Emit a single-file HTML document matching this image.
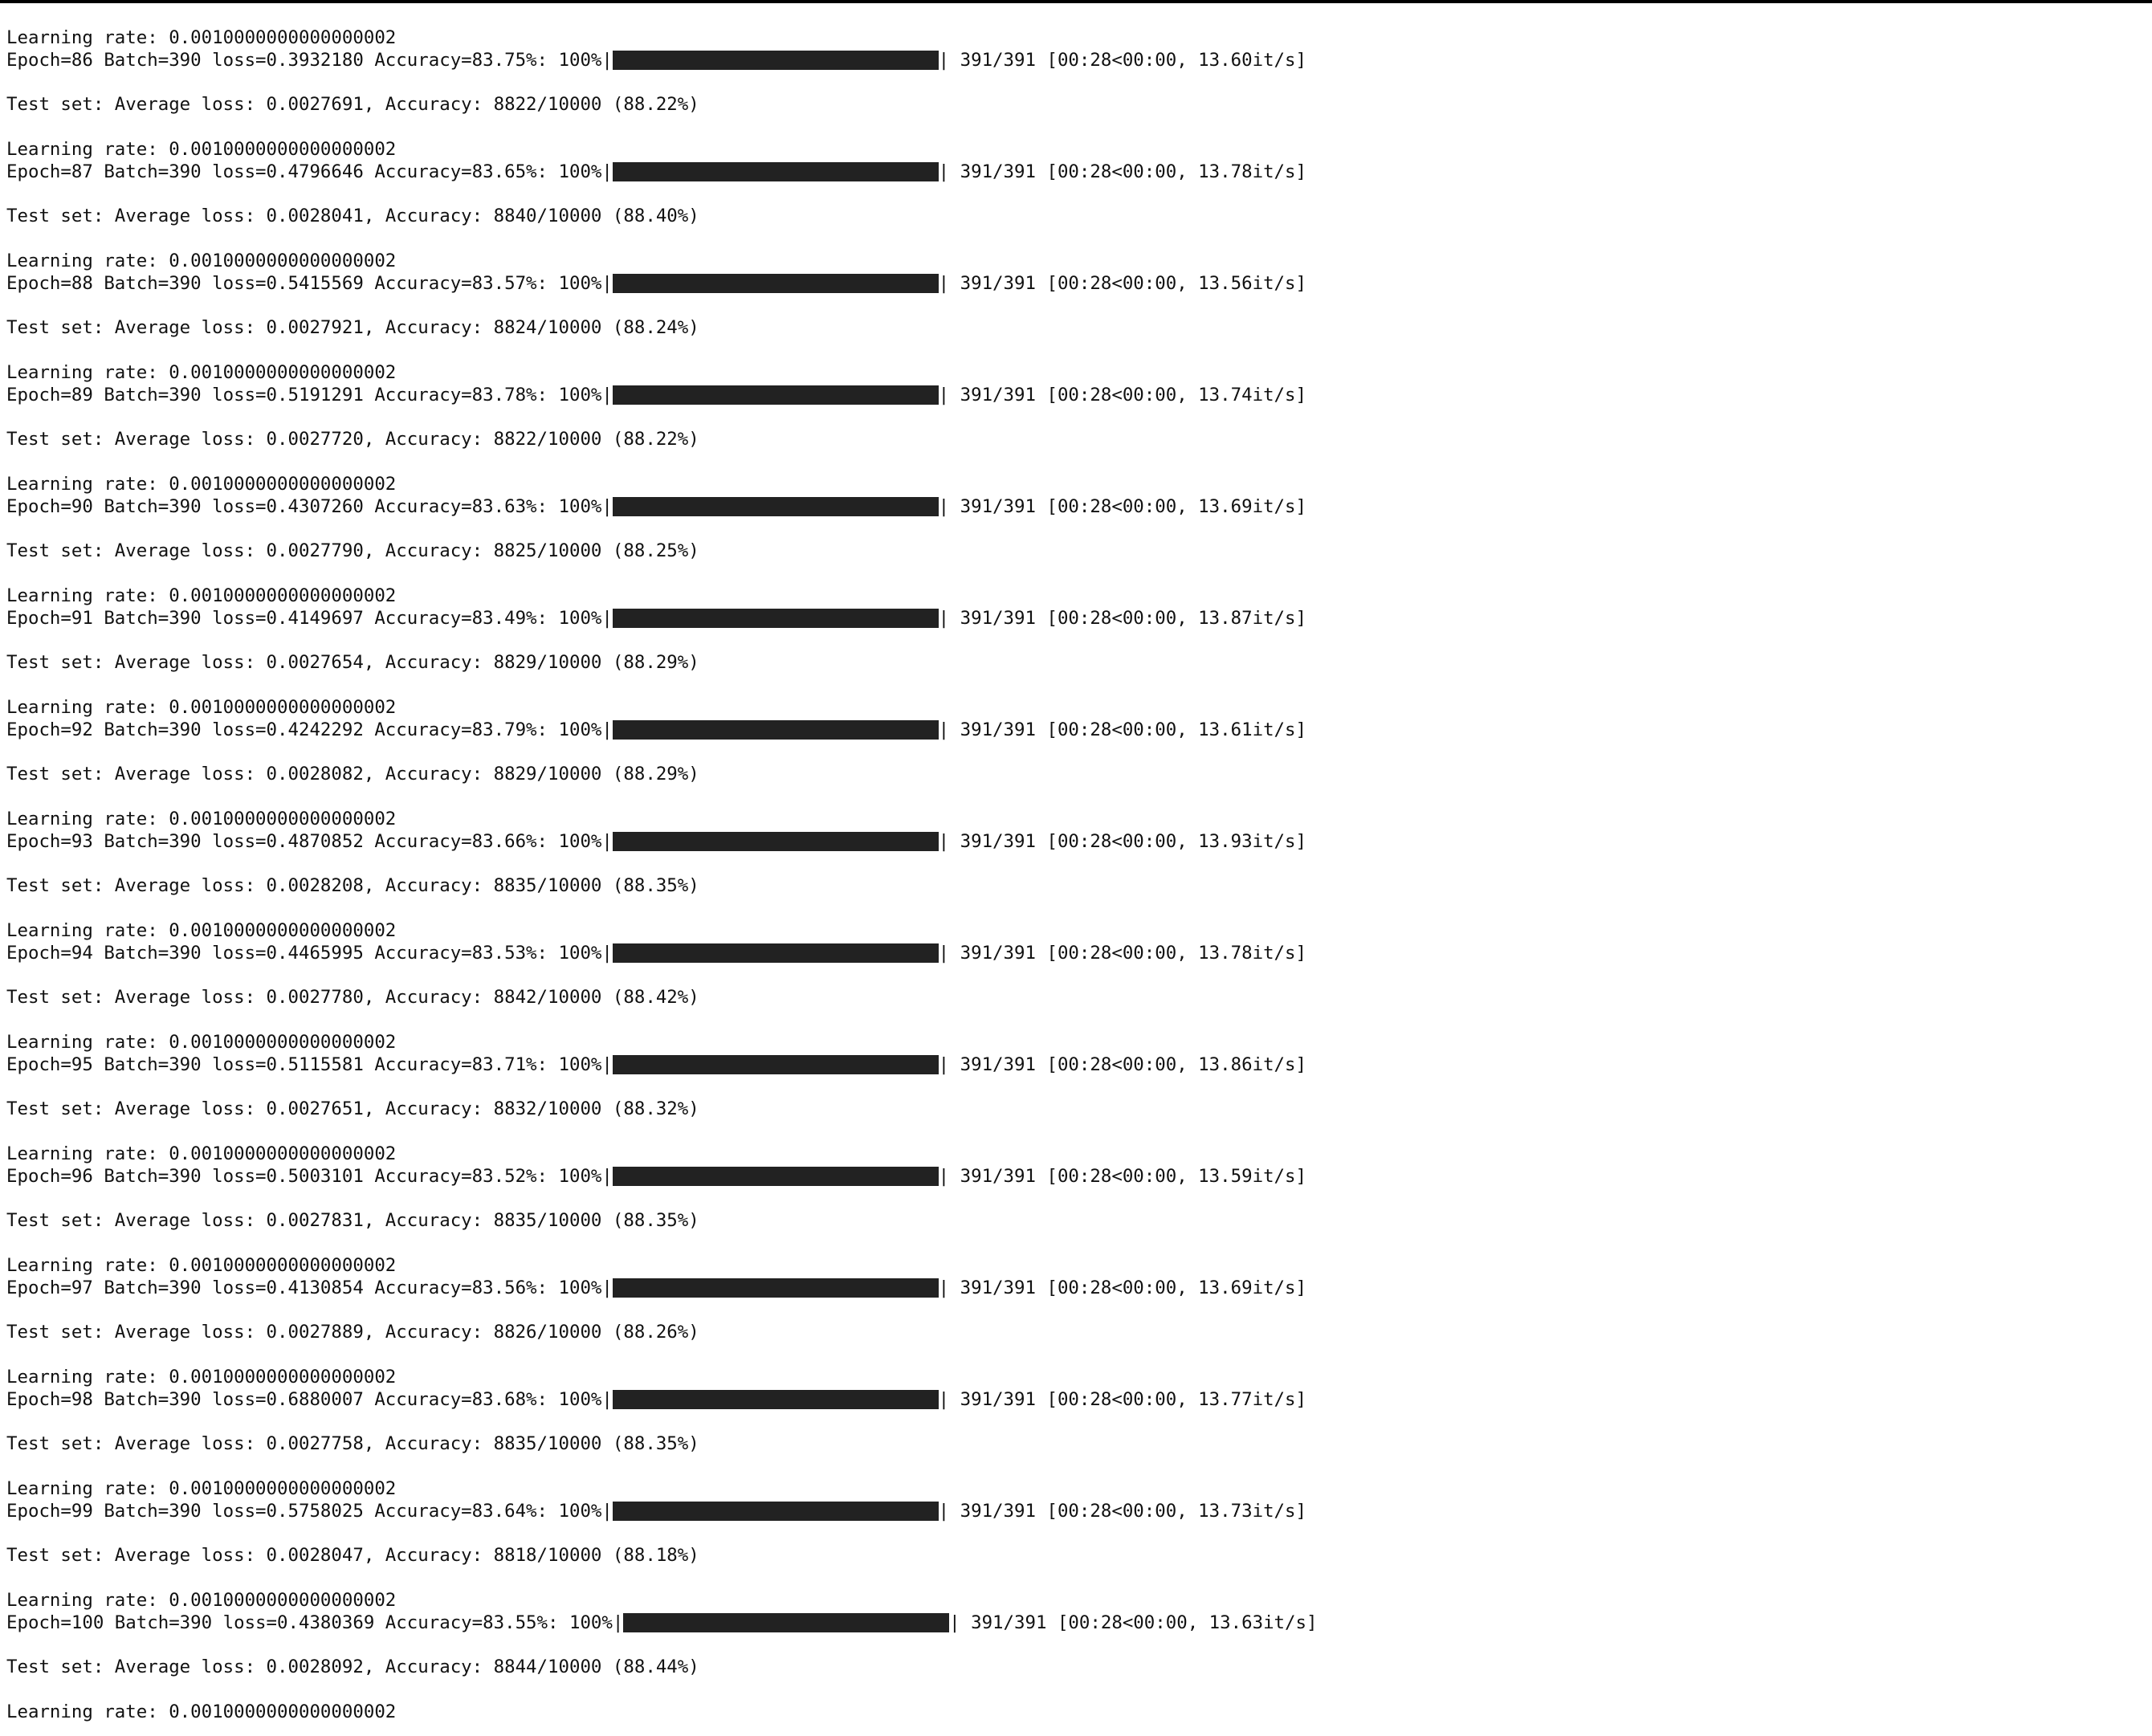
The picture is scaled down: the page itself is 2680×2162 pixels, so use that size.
<!DOCTYPE html>
<html><head><meta charset="utf-8"><style>
html,body{margin:0;padding:0;background:#fff;width:2680px;height:2162px;overflow:hidden}
.top{position:absolute;left:0;top:0;width:2680px;height:4px;background:#000}
pre{position:absolute;left:8px;top:34px;margin:0;font-family:"DejaVu Sans Mono","Liberation Mono",monospace;font-size:22.4px;line-height:27.8px;color:#111}
.b{display:inline-block;width:30.1ch;height:24px;background:#222;vertical-align:-5px}
</style></head><body><div class="top"></div>
<pre>Learning rate: 0.0010000000000000002
Epoch=86 Batch=390 loss=0.3932180 Accuracy=83.75%: 100%|<span class="b"></span>| 391/391 [00:28&lt;00:00, 13.60it/s]

Test set: Average loss: 0.0027691, Accuracy: 8822/10000 (88.22%)

Learning rate: 0.0010000000000000002
Epoch=87 Batch=390 loss=0.4796646 Accuracy=83.65%: 100%|<span class="b"></span>| 391/391 [00:28&lt;00:00, 13.78it/s]

Test set: Average loss: 0.0028041, Accuracy: 8840/10000 (88.40%)

Learning rate: 0.0010000000000000002
Epoch=88 Batch=390 loss=0.5415569 Accuracy=83.57%: 100%|<span class="b"></span>| 391/391 [00:28&lt;00:00, 13.56it/s]

Test set: Average loss: 0.0027921, Accuracy: 8824/10000 (88.24%)

Learning rate: 0.0010000000000000002
Epoch=89 Batch=390 loss=0.5191291 Accuracy=83.78%: 100%|<span class="b"></span>| 391/391 [00:28&lt;00:00, 13.74it/s]

Test set: Average loss: 0.0027720, Accuracy: 8822/10000 (88.22%)

Learning rate: 0.0010000000000000002
Epoch=90 Batch=390 loss=0.4307260 Accuracy=83.63%: 100%|<span class="b"></span>| 391/391 [00:28&lt;00:00, 13.69it/s]

Test set: Average loss: 0.0027790, Accuracy: 8825/10000 (88.25%)

Learning rate: 0.0010000000000000002
Epoch=91 Batch=390 loss=0.4149697 Accuracy=83.49%: 100%|<span class="b"></span>| 391/391 [00:28&lt;00:00, 13.87it/s]

Test set: Average loss: 0.0027654, Accuracy: 8829/10000 (88.29%)

Learning rate: 0.0010000000000000002
Epoch=92 Batch=390 loss=0.4242292 Accuracy=83.79%: 100%|<span class="b"></span>| 391/391 [00:28&lt;00:00, 13.61it/s]

Test set: Average loss: 0.0028082, Accuracy: 8829/10000 (88.29%)

Learning rate: 0.0010000000000000002
Epoch=93 Batch=390 loss=0.4870852 Accuracy=83.66%: 100%|<span class="b"></span>| 391/391 [00:28&lt;00:00, 13.93it/s]

Test set: Average loss: 0.0028208, Accuracy: 8835/10000 (88.35%)

Learning rate: 0.0010000000000000002
Epoch=94 Batch=390 loss=0.4465995 Accuracy=83.53%: 100%|<span class="b"></span>| 391/391 [00:28&lt;00:00, 13.78it/s]

Test set: Average loss: 0.0027780, Accuracy: 8842/10000 (88.42%)

Learning rate: 0.0010000000000000002
Epoch=95 Batch=390 loss=0.5115581 Accuracy=83.71%: 100%|<span class="b"></span>| 391/391 [00:28&lt;00:00, 13.86it/s]

Test set: Average loss: 0.0027651, Accuracy: 8832/10000 (88.32%)

Learning rate: 0.0010000000000000002
Epoch=96 Batch=390 loss=0.5003101 Accuracy=83.52%: 100%|<span class="b"></span>| 391/391 [00:28&lt;00:00, 13.59it/s]

Test set: Average loss: 0.0027831, Accuracy: 8835/10000 (88.35%)

Learning rate: 0.0010000000000000002
Epoch=97 Batch=390 loss=0.4130854 Accuracy=83.56%: 100%|<span class="b"></span>| 391/391 [00:28&lt;00:00, 13.69it/s]

Test set: Average loss: 0.0027889, Accuracy: 8826/10000 (88.26%)

Learning rate: 0.0010000000000000002
Epoch=98 Batch=390 loss=0.6880007 Accuracy=83.68%: 100%|<span class="b"></span>| 391/391 [00:28&lt;00:00, 13.77it/s]

Test set: Average loss: 0.0027758, Accuracy: 8835/10000 (88.35%)

Learning rate: 0.0010000000000000002
Epoch=99 Batch=390 loss=0.5758025 Accuracy=83.64%: 100%|<span class="b"></span>| 391/391 [00:28&lt;00:00, 13.73it/s]

Test set: Average loss: 0.0028047, Accuracy: 8818/10000 (88.18%)

Learning rate: 0.0010000000000000002
Epoch=100 Batch=390 loss=0.4380369 Accuracy=83.55%: 100%|<span class="b"></span>| 391/391 [00:28&lt;00:00, 13.63it/s]

Test set: Average loss: 0.0028092, Accuracy: 8844/10000 (88.44%)

Learning rate: 0.0010000000000000002</pre>
</body></html>
